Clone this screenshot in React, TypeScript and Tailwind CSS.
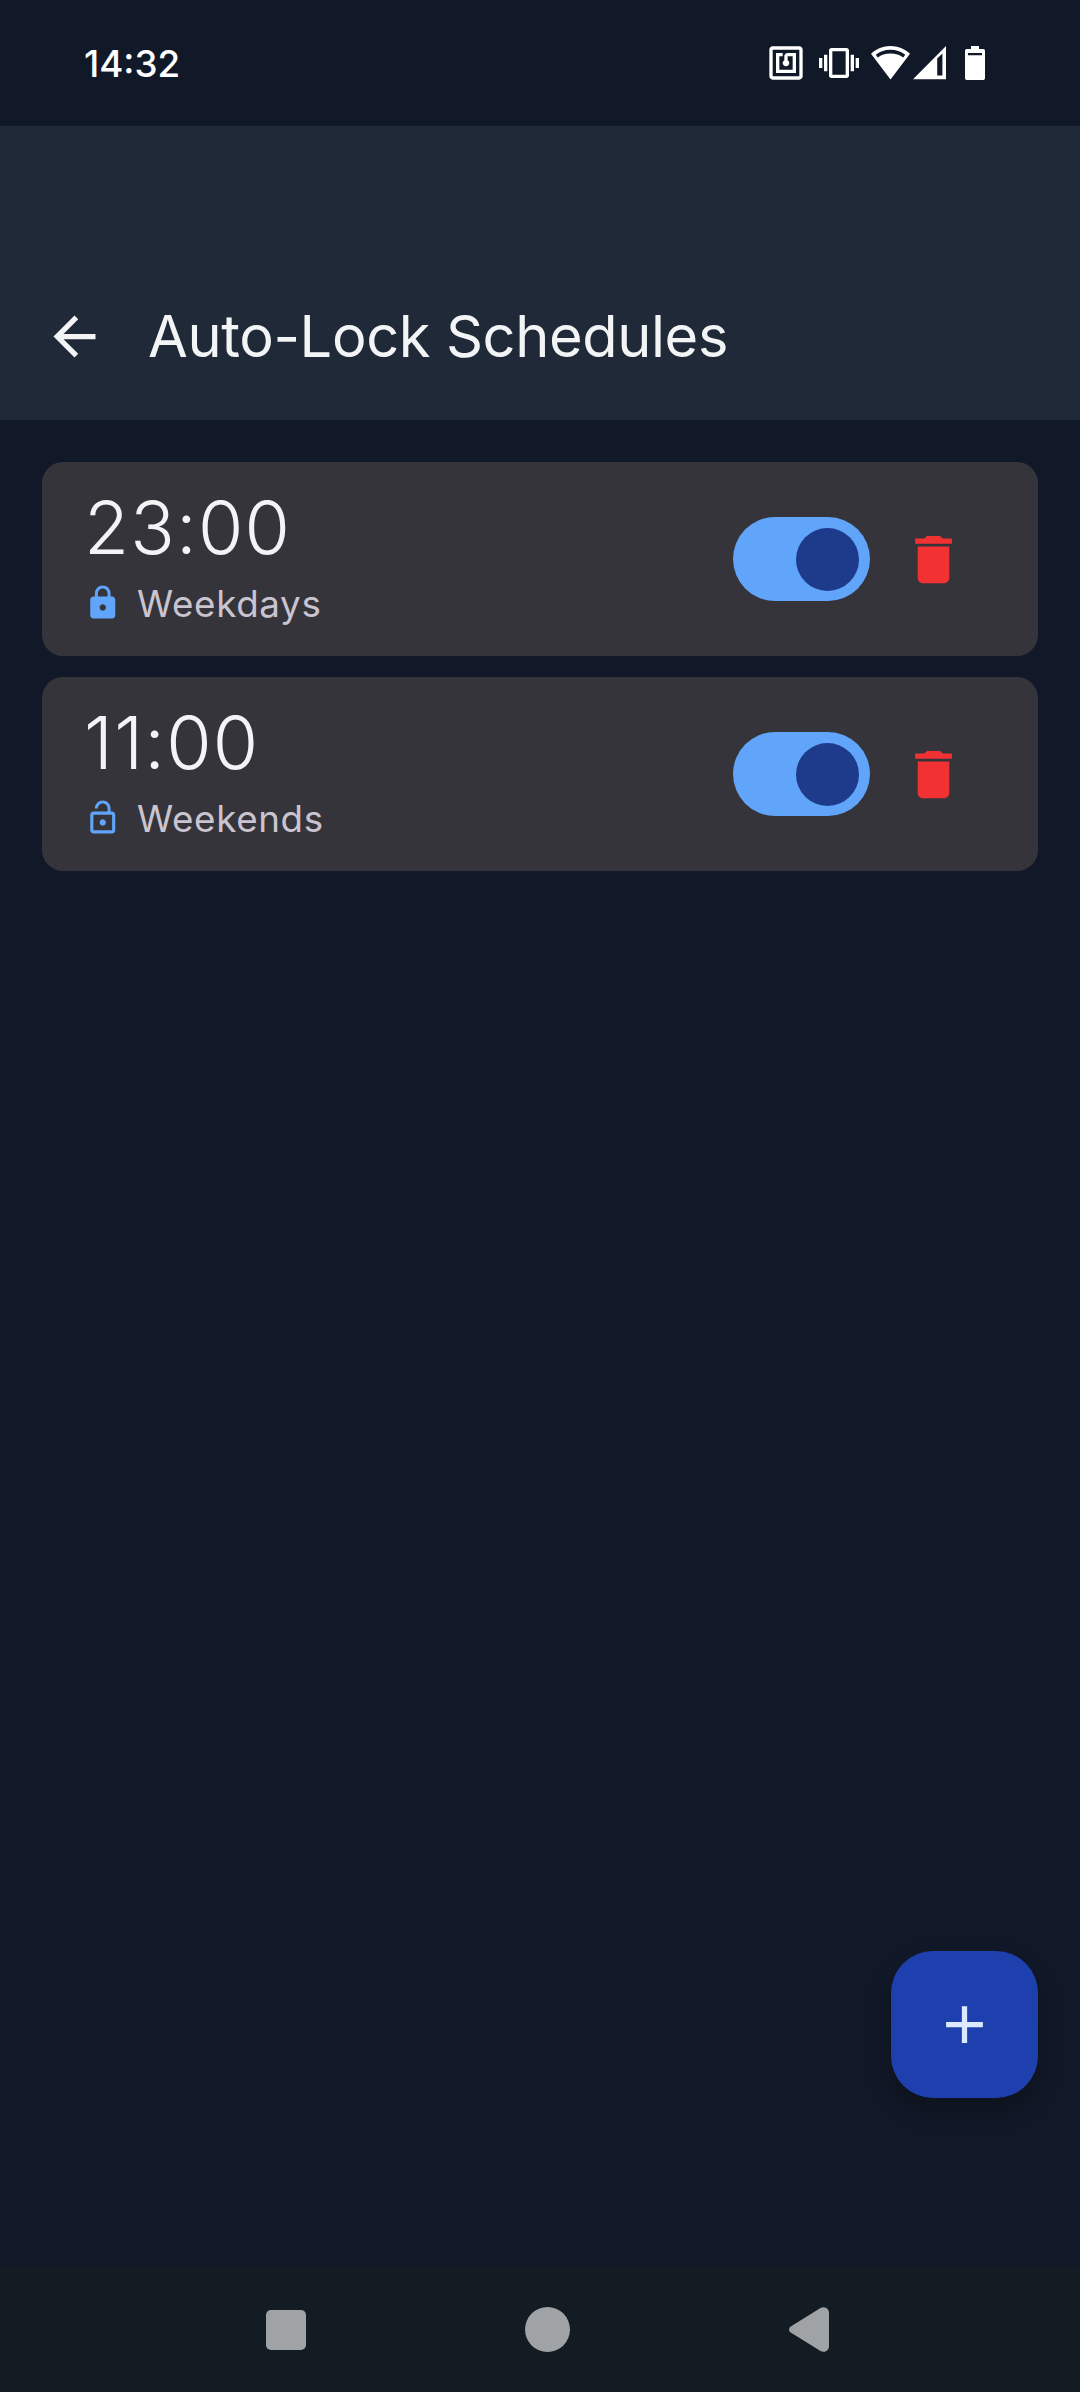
import React from "react";

type Schedule = { time: string; label: string; locked: boolean };

const schedules: Schedule[] = [
  { time: "23:00", label: "Weekdays", locked: true },
  { time: "11:00", label: "Weekends", locked: false },
];

const LOCK =
  "M18 8h-1V6c0-2.76-2.24-5-5-5S7 3.24 7 6v2H6c-1.1 0-2 .9-2 2v10c0 1.1.9 2 2 2h12c1.1 0 2-.9 2-2V10c0-1.1-.9-2-2-2zm-6 9c-1.1 0-2-.9-2-2s.9-2 2-2 2 .9 2 2-.9 2-2 2zM15.1 8H8.9V6c0-1.71 1.39-3.1 3.1-3.1s3.1 1.39 3.1 3.1v2z";
const LOCK_OPEN =
  "M12 17c1.1 0 2-.9 2-2s-.9-2-2-2-2 .9-2 2 .9 2 2 2zm6-9h-1V6c0-2.76-2.24-5-5-5S7 3.24 7 6h1.9c0-1.71 1.39-3.1 3.1-3.1s3.1 1.39 3.1 3.1v2H6c-1.1 0-2 .9-2 2v10c0 1.1.9 2 2 2h12c1.1 0 2-.9 2-2V10c0-1.1-.9-2-2-2zm0 12H6V10h12v10z";
const NFC =
  "M20 2H4c-1.1 0-2 .9-2 2v16c0 1.1.9 2 2 2h16c1.1 0 2-.9 2-2V4c0-1.1-.9-2-2-2zm0 18H4V4h16v16zM18 6h-5c-1.1 0-2 .9-2 2v2.28c-.6.35-1 .98-1 1.72 0 1.1.9 2 2 2s2-.9 2-2c0-.74-.4-1.38-1-1.72V8h3v8H8V8h2V6H6v12h12V6z";
const VIBRATION =
  "M0 15h2V9H0v6zm3 2h2V7H3v10zm19-8v6h2V9h-2zm-3 8h2V7h-2v10zM16.5 3h-9C6.67 3 6 3.67 6 4.5v15c0 .83.67 1.5 1.5 1.5h9c.83 0 1.5-.67 1.5-1.5v-15c0-.83-.67-1.5-1.5-1.5zM16 19H8V5h8v14z";

function Icon({ d, className }: { d: string; className: string }) {
  return (
    <svg viewBox="0 0 24 24" fill="currentColor" className={className}>
      <path d={d} />
    </svg>
  );
}

function StatusBar() {
  return (
    <div className="flex h-[126px] items-center justify-between pl-[84px] pr-[95px] text-white">
      <span className="pt-[2px] text-[36.75px] font-medium leading-none">14:32</span>
      <div className="flex items-center">
        <Icon d={NFC} className="size-10" />
        <Icon d={VIBRATION} className="ml-[13px] size-10" />
        <svg viewBox="0 0 39 34" className="ml-3 h-[34px] w-[39px]">
          <path
            fill="currentColor"
            fillRule="evenodd"
            d="M19.5 0C12 0 5.2 3 0 7.8L19.5 33.5 39 7.8C33.8 3 27 0 19.5 0zM4.8 8.7C9 5.5 14 3.7 19.5 3.7S30 5.5 34.2 8.7L32.2 11.4C29 9.1 24.5 7.6 19.5 7.6S10 9.1 6.8 11.4z"
          />
        </svg>
        <svg viewBox="0 0 33 34" className="ml-[3px] h-[34px] w-[33px]">
          <path fill="currentColor" fillRule="evenodd" d="M33 0v33.3H0zM24.2 12.5v17h5.2V7.5z" />
        </svg>
        <svg viewBox="0 0 20 34" className="ml-[19px] h-[34px] w-5">
          <path
            fill="currentColor"
            fillRule="evenodd"
            d="M6 0h8v3h4.3q1.7 0 1.7 1.7v27.6q0 1.7-1.7 1.7H1.7Q0 34 0 32.3V4.7Q0 3 1.7 3H6zM3 7v2.2h14V7z"
          />
        </svg>
      </div>
    </div>
  );
}

function ScheduleCard({ time, label, locked }: Schedule) {
  return (
    <li className="flex h-[194px] items-center justify-between rounded-[21px] bg-[#36343b] pl-[42px] pr-[73px]">
      <div className="flex flex-col gap-[3px] pb-[7px]">
        <span className="text-[73.5px] font-light leading-[94px] tracking-[1.2px] text-[#f3f4f6]">{time}</span>
        <div className="flex items-center gap-[15.5px] leading-[52px]">
          <Icon d={locked ? LOCK : LOCK_OPEN} className="mb-[2px] size-[37.5px] text-[#60a5fa]" />
          <span className="text-[36.75px] tracking-[0.656px] text-[#cac4d0]">{label}</span>
        </div>
      </div>
      <div className="flex items-center gap-8">
        <button
          role="switch"
          aria-checked="true"
          aria-label={label}
          className="flex h-[84px] w-[137px] items-center justify-end rounded-full bg-[#60a5fa] pr-[11px]"
        >
          <span className="size-[63px] rounded-full bg-[#1e3a8a]" />
        </button>
        <button aria-label="Delete">
          <Icon
            d="M6 19c0 1.1.9 2 2 2h8c1.1 0 2-.9 2-2V7H6v12zM19 4h-3.5l-1-1h-5l-1 1H5v2h14V4z"
            className="size-[63px] text-[#f23232]"
          />
        </button>
      </div>
    </li>
  );
}

export default function App() {
  return (
    <div className="flex h-[2392px] w-[1080px] flex-col overflow-hidden bg-[#111827] font-['Inter',sans-serif]">
      <StatusBar />
      <header className="flex h-[294px] items-end bg-[#1f2937] pb-[42px] pl-[43px] text-[#f3f4f6]">
        <div className="flex h-[84px] items-center gap-[42px]">
          <Icon
            d="M20 11H7.83l5.59-5.59L12 4l-8 8 8 8 1.41-1.41L7.83 13H20v-2z"
            className="size-[63px]"
          />
          <h1 className="text-[57.75px] font-normal leading-[74px] tracking-[-0.38px]">Auto-Lock Schedules</h1>
        </div>
      </header>
      <main className="flex flex-1 flex-col justify-between px-[42px] pb-[168px] pt-[42px]">
        <ul className="flex flex-col gap-[21px]">
          {schedules.map((s) => (
            <ScheduleCard key={s.label} {...s} />
          ))}
        </ul>
        <button
          aria-label="Add schedule"
          className="flex size-[147px] items-center justify-center self-end rounded-[42px] bg-[#1e40af] text-[#dbeafe] shadow-[0_12px_24px_rgba(0,0,0,0.25)]"
        >
          <Icon d="M19 13h-6v6h-2v-6H5v-2h6V5h2v6h6v2z" className="size-[63px]" />
        </button>
      </main>
      <nav className="flex h-[126px] items-center bg-[#131b23] pl-[266px] pt-[1px] text-[#a0a3a5]">
        <div className="size-10 rounded-[5px] bg-current" />
        <div className="ml-[219px] size-[45px] rounded-full bg-current" />
        <svg viewBox="0 0 40 45" className="ml-[218.5px] h-[45px] w-10">
          <path
            fill="currentColor"
            d="M31.5 1.1Q34 -.4 37 .8 40 2.5 40 6v33q0 3.5-3 5.2-3 1.2-5.5-.3L2.5 26Q0 24.8 0 22.5T2.5 19z"
          />
        </svg>
      </nav>
    </div>
  );
}
